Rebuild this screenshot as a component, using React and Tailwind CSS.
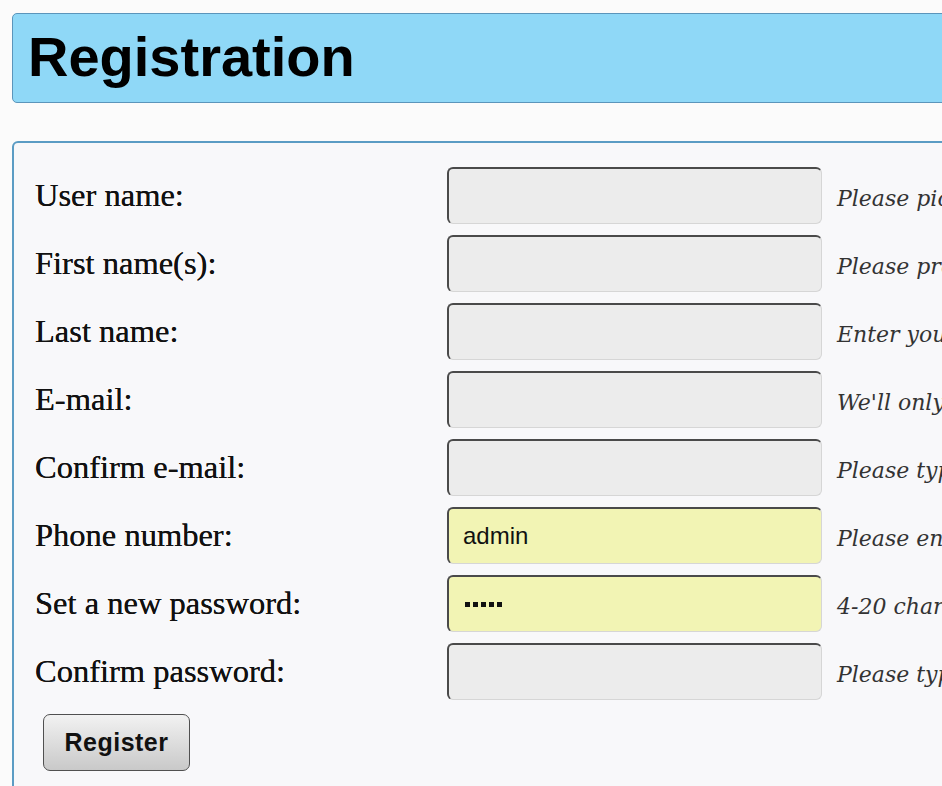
import React from "react";

const rows = [
  { label: "User name:", hint: "Please pick a user name", value: "", fill: false },
  { label: "First name(s):", hint: "Please provide your first name(s)", value: "", fill: false },
  { label: "Last name:", hint: "Enter your last name", value: "", fill: false },
  { label: "E-mail:", hint: "We'll only use this to contact you", value: "", fill: false },
  { label: "Confirm e-mail:", hint: "Please type your e-mail again", value: "", fill: false },
  { label: "Phone number:", hint: "Please enter your phone number", value: "admin", fill: true },
  { label: "Set a new password:", hint: "4-20 characters", value: "pw", fill: true },
  { label: "Confirm password:", hint: "Please type your password again", value: "", fill: false },
];

function Field({ value, fill }) {
  const bg = fill ? "bg-[#f2f4b4]" : "bg-[#ececec]";
  return (
    <div
      className={`w-[375px] h-[57px] shrink-0 rounded-[6px] border-t-2 border-l-2 border-r border-b border-t-[#4a4a4a] border-l-[#4a4a4a] border-r-[#d6d6d6] border-b-[#d6d6d6] ${bg} flex items-center pl-[14px]`}
    >
      {value === "admin" && (
        <span className="text-[24px] text-[#111] font-['Liberation_Sans',Arial,sans-serif]">admin</span>
      )}
      {value === "pw" && (
        <span className="flex gap-[3px] items-center pl-[2px]">
          <span className="w-[5px] h-[5px] bg-[#111]" />
          <span className="w-[5px] h-[5px] bg-[#111]" />
          <span className="w-[5px] h-[5px] bg-[#111]" />
          <span className="w-[5px] h-[5px] bg-[#111]" />
          <span className="w-[5px] h-[5px] bg-[#111]" />
        </span>
      )}
    </div>
  );
}

export default function App() {
  return (
    <div className="w-[942px] h-[786px] overflow-hidden bg-[#fbfbfb]">
      <div className="pl-[12px] pt-[13px] w-[1100px]">
        <div className="h-[90px] w-[1000px] rounded-[5px] border border-[#5b95bb] bg-[#8fd8f7] flex items-center pl-[15px]">
          <h1 className="text-[56px] font-bold text-black leading-none font-['Liberation_Sans',Arial,sans-serif] pb-[2px]">
            Registration
          </h1>
        </div>
        <div className="mt-[38px] w-[1000px] rounded-[6px] border-2 border-[#5b9cc4] bg-[#f8f8fa] pl-[21px] pt-[24px] pb-[40px]">
          <div className="flex flex-col gap-[11px]">
            {rows.map((r) => (
              <div key={r.label} className="flex items-center">
                <div className="w-[412px] shrink-0 text-[32.5px] text-[#111] leading-none font-['Liberation_Serif','Times_New_Roman',serif] [text-shadow:0_0_0.4px_#111]">
                  {r.label}
                </div>
                <Field value={r.value} fill={r.fill} />
                <div className="ml-[15px] mt-[5px] whitespace-nowrap italic text-[22px] text-[#333] font-['DejaVu_Serif',Georgia,serif]">
                  {r.hint}
                </div>
              </div>
            ))}
          </div>
          <button className="mt-[14px] ml-[8px] w-[147px] h-[57px] rounded-[7px] border border-[#505050] bg-gradient-to-b from-[#f2f2f2] to-[#c9c9c9] text-[25px] font-bold text-[#111] tracking-[0.5px] font-['Liberation_Sans',Arial,sans-serif]">
            Register
          </button>
        </div>
      </div>
    </div>
  );
}
